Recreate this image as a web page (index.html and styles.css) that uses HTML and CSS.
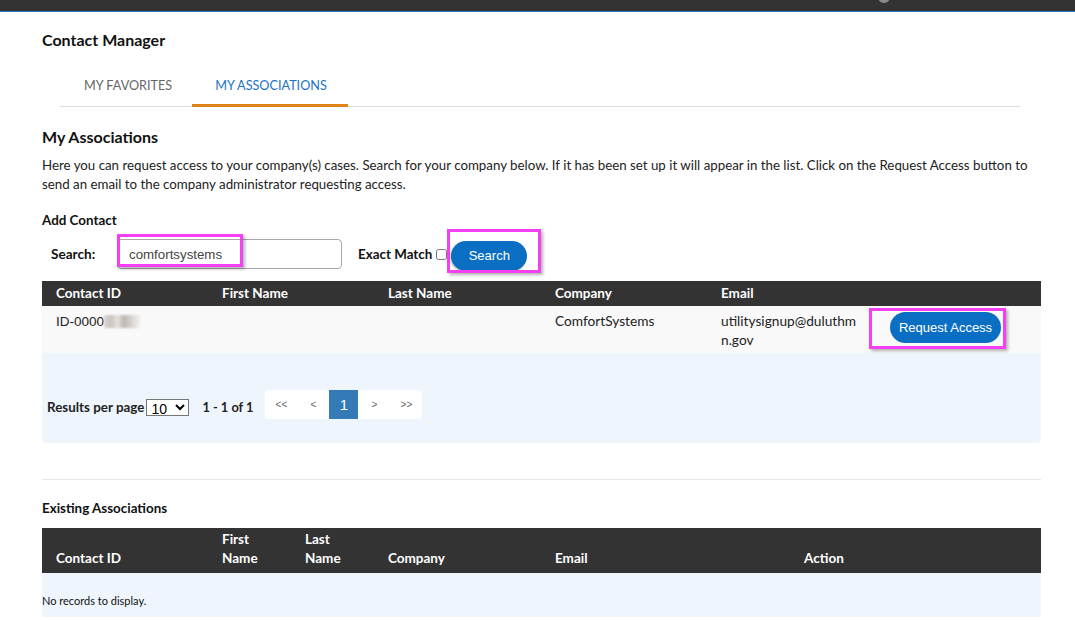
FILE: index.html
```html
<!DOCTYPE html>
<html lang="en">
<head>
<meta charset="utf-8">
<title>Contact Manager</title>
<link rel="stylesheet" href="styles.css">
</head>
<body>
<div class="topbar"><span class="topbar-dot"></span></div>
<main class="page">
  <h1 class="title">Contact Manager</h1>
  <ul class="tabs">
    <li class="tab">MY FAVORITES</li>
    <li class="tab tab-active">MY ASSOCIATIONS</li>
  </ul>

  <h2 class="section-title">My Associations</h2>
  <p class="intro">Here you can request access to your company(s) cases. Search for your company below. If it has been set up it will appear in the list. Click on the Request Access button to send an email to the company administrator requesting access.</p>

  <div class="label-strong">Add Contact</div>
  <div class="search-row">
    <label class="search-label">Search:</label>
    <div class="input-wrap">
      <input class="search-input" type="text" value="comfortsystems">
      <span class="highlight hl-input"></span>
    </div>
    <label class="exact">Exact Match</label>
    <input class="exact-box" type="checkbox">
    <div class="btn-wrap">
      <button class="btn btn-search">Search</button>
      <span class="highlight hl-search"></span>
    </div>
  </div>

  <table class="grid grid-results">
    <colgroup>
      <col class="c166"><col class="c166"><col class="c167"><col class="c166"><col class="c166"><col>
    </colgroup>
    <thead>
      <tr><th>Contact ID</th><th>First Name</th><th>Last Name</th><th>Company</th><th>Email</th><th></th></tr>
    </thead>
    <tbody>
      <tr class="result-row">
        <td><span class="id-text">ID-0000</span><span class="blurred"></span></td>
        <td></td>
        <td></td>
        <td>ComfortSystems</td>
        <td class="email">utilitysignup@duluthmn.gov</td>
        <td class="action-cell">
          <div class="btn-wrap">
            <button class="btn btn-request">Request Access</button>
            <span class="highlight hl-request"></span>
          </div>
        </td>
      </tr>
    </tbody>
  </table>
  <div class="pager-area">
    <span class="pager-label">Results per page</span>
    <select class="page-size"><option>10</option></select>
    <span class="pager-count">1 - 1 of 1</span>
    <div class="pager">
      <span class="pg">&lt;&lt;</span>
      <span class="pg">&lt;</span>
      <span class="pg pg-active">1</span>
      <span class="pg">&gt;</span>
      <span class="pg">&gt;&gt;</span>
    </div>
  </div>

  <hr class="divider">

  <div class="label-strong existing">Existing Associations</div>
  <table class="grid grid-existing">
    <colgroup>
      <col class="c166"><col class="c83"><col class="c83"><col class="c167"><col class="c249"><col>
    </colgroup>
    <thead>
      <tr><th>Contact ID</th><th>First<br>Name</th><th>Last<br>Name</th><th>Company</th><th>Email</th><th>Action</th></tr>
    </thead>
    <tbody>
      <tr class="empty-row"><td colspan="6">No records to display.</td></tr>
    </tbody>
  </table>
</main>
</body>
</html>
```

FILE: styles.css
```css
* { box-sizing: border-box; }

body {
  margin: 0;
  background: #fff;
  font-family: Lato, "Open Sans", sans-serif;
  color: #222;
}

.topbar {
  height: 12px;
  background: #333;
  border-bottom: 1px solid #2479c9;
  display: flex;
  justify-content: flex-end;
  padding-right: 185px;
  overflow: hidden;
}

.topbar-dot {
  width: 12px;
  height: 12px;
  border-radius: 50%;
  background: #8a8a8a;
  margin-top: -9px;
}

.page {
  width: 999px;
  margin-left: 42px;
}

.title {
  margin: 18px 0 0;
  font-size: 16px;
  line-height: 20px;
  font-weight: 700;
  color: #111;
}

.tabs {
  list-style: none;
  margin: 13px 21px 0 18px;
  padding: 0;
  display: flex;
  border-bottom: 1px solid #ddd;
}

.tab {
  height: 44px;
  padding: 3px 20px 0 24px;
  display: flex;
  align-items: center;
  font-size: 12.65px;
  color: #666;
  border-bottom: 3px solid transparent;
  margin-bottom: -1px;
}

.tab-active {
  padding: 3px 21px 0 23px;
  color: #1a73c6;
  border-bottom-color: #e0841a;
}

.section-title {
  margin: 19px 0 0;
  font-size: 16px;
  line-height: 22px;
  font-weight: 700;
  color: #111;
}

.intro {
  margin: 8px 0 0;
  font-size: 13.3px;
  line-height: 19px;
  color: #222;
}

.label-strong {
  margin-top: 17px;
  font-size: 13.4px;
  line-height: 18px;
  font-weight: 700;
  color: #111;
}

.search-row {
  margin-top: 10px;
  height: 30px;
  display: flex;
  align-items: center;
}

.search-label {
  margin-left: 9px;
  width: 66px;
  font-size: 13.6px;
  font-weight: 700;
  color: #111;
}

.input-wrap,
.btn-wrap {
  position: relative;
  display: inline-block;
}

.search-input {
  display: block;
  width: 225px;
  height: 30px;
  border: 1px solid #a9a9a9;
  border-radius: 4px;
  padding: 0 11px;
  font-family: "Liberation Sans", Arial, sans-serif;
  font-size: 13.3px;
  color: #444;
  outline: none;
}

.exact {
  margin-left: 16px;
  font-size: 13.4px;
  font-weight: 700;
  color: #111;
}

.exact-box {
  margin: 0 0 0 4px;
  width: 11px;
  height: 11px;
}

.btn {
  border: 0;
  background: #0a6fc2;
  color: #fff;
  font-family: "Liberation Sans", Arial, sans-serif;
  font-size: 13px;
  display: block;
}

.btn-search {
  margin-left: 4px;
  margin-top: 3px;
  width: 76px;
  height: 30px;
  border-radius: 15px;
  box-shadow: -1px 1px 2px rgba(0, 0, 0, 0.25);
}

.btn-request {
  width: 111px;
  height: 31px;
  border-radius: 16px;
}

.highlight {
  position: absolute;
  border: 3px solid #f53ff5;
  box-shadow: 2px 2px 3px rgba(0, 0, 0, 0.3);
  pointer-events: none;
}

.hl-input {
  left: 0;
  top: -5px;
  width: 126px;
  height: 33px;
}

.hl-search {
  left: 0;
  top: -9px;
  width: 94px;
  height: 44px;
}

.hl-request {
  left: -21px;
  top: -4px;
  width: 137px;
  height: 41px;
}

.grid {
  width: 999px;
  border-collapse: collapse;
  table-layout: fixed;
}

.grid-results { margin-top: 12px; }

.c166 { width: 166px; }
.c167 { width: 167px; }
.c83 { width: 83px; }
.c249 { width: 249px; }

.grid th {
  background: #333;
  color: #fff;
  font-size: 13.5px;
  font-weight: 700;
  text-align: left;
  padding: 3px 14px 3px;
  line-height: 19px;
  vertical-align: bottom;
}

.grid-existing th {
  padding: 2px 14px 5px;
}

.result-row td {
  background: #f9f9f9;
  font-size: 13.7px;
  line-height: 19px;
  color: #222;
  padding: 5px 14px 4px;
  height: 46px;
  vertical-align: top;
}

.id-text {
  font-family: "Liberation Sans", Arial, sans-serif;
  font-size: 13.5px;
}

.blurred {
  display: inline-block;
  vertical-align: -2px;
  width: 36px;
  height: 13px;
  background: linear-gradient(90deg, #d8d4d0 0, #c9c4c0 20%, #e6e3e1 38%, #bdb6b2 55%, #d2cdca 72%, #e3e1e0 86%, #eeeeee 100%);
  filter: blur(1px);
}

.email {
  word-break: break-all;
}

.result-row .action-cell {
  padding: 6px 0 0 17px;
}

.pager-area {
  height: 90px;
  background: #eef5fd;
  border-radius: 0 0 4px 4px;
  display: flex;
  align-items: center;
  padding: 12px 5px 0;
}

.pager-label {
  font-size: 13.4px;
  font-weight: 700;
  color: #222;
  margin-top: 6px;
}

.page-size {
  margin: 6px 0 0 2px;
  width: 43px;
  height: 17px;
  font-family: "Liberation Sans", Arial, sans-serif;
  font-size: 14px;
  border: 1px solid #767676;
  border-radius: 0;
  background: #fff;
  padding: 0;
}

.pager-count {
  margin-left: 13px;
  margin-top: 6px;
  font-size: 12.8px;
  font-weight: 700;
  color: #222;
}

.pager {
  margin-left: 12px;
  display: flex;
  background: #fff;
  border-radius: 4px;
  height: 29px;
  overflow: hidden;
}

.pg {
  width: 32px;
  display: flex;
  align-items: center;
  justify-content: center;
  font-family: "Liberation Sans", Arial, sans-serif;
  font-size: 10px;
  color: #666;
}

.pg-active {
  width: 29px;
  background: #337ab7;
  color: #fff;
  font-size: 15px;
}

.divider {
  margin: 36px 0 0;
  border: 0;
  border-top: 1px solid #e6e6e6;
  height: 0;
}

.existing { margin-top: 19px; }

.grid-existing { margin-top: 11px; }

.empty-row td {
  background: #eef5fd;
  height: 44px;
  font-size: 11px;
  color: #111;
  padding: 10px 0 0;
  vertical-align: middle;
}
```
